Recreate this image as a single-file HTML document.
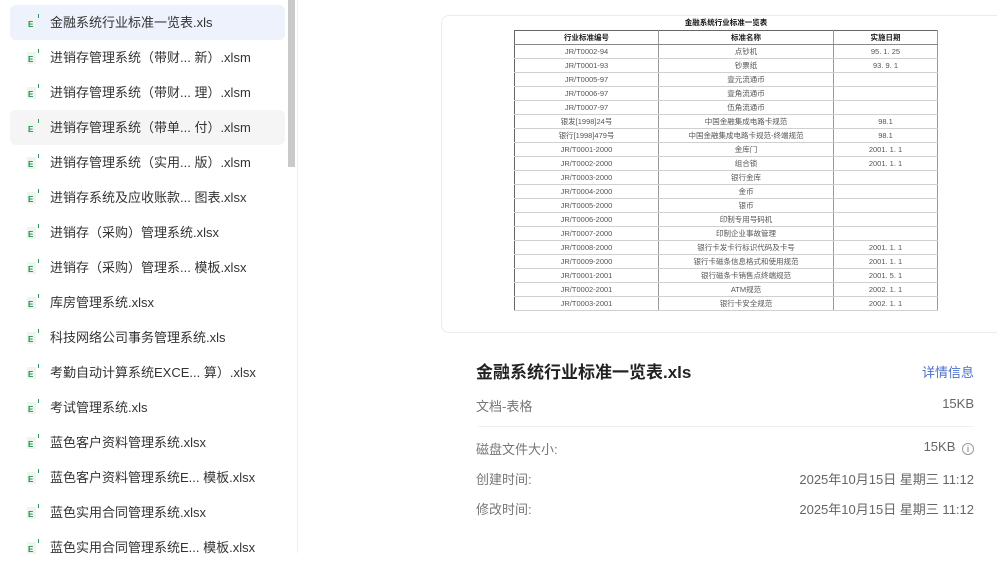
<!DOCTYPE html>
<html><head><meta charset="utf-8"><style>
*{margin:0;padding:0;box-sizing:border-box}
body{width:997px;height:553px;overflow:hidden;background:#fff;font-family:"Liberation Sans","Noto Sans CJK SC",sans-serif;position:relative}
.row{position:absolute;left:10px;width:275px;height:35px;border-radius:6px;font-size:13px;color:#333;line-height:35px;padding-left:40px}
.row .ic{position:absolute;left:17px;top:12px;width:9px;height:12px;background:#eef5ef}
.row .ic b{position:absolute;left:1px;bottom:0;font-size:8px;line-height:8px;color:#1f8f4e;font-weight:bold}
.row .ic i{position:absolute;right:-3px;top:-3px;width:1px;height:4px;background:#2a9a5a}
.sb{position:absolute;left:288px;top:0;width:7px;height:167px;background:#c9c9c9}
.vl{position:absolute;left:297px;top:0;width:1px;height:553px;background:#f0f0f0}
.card{position:absolute;left:441px;top:15px;width:580px;height:318px;border:1px solid #ebebeb;border-radius:8px}
.ttl{position:absolute;left:514px;top:17px;width:424px;text-align:center;font-size:7.5px;font-weight:bold;color:#111}
table{position:absolute;left:514px;top:30px;width:424px;border-collapse:collapse;font-size:7.5px;color:#555;border:1px solid #666}
td{height:14px;text-align:center;border-right:1px solid #999;border-bottom:1px solid #d0d0d0;padding:0;line-height:13px}
tr:first-child td{font-weight:bold;color:#222;border-bottom:1px solid #888}
.m{position:absolute;font-size:13px;color:#777}
.r{position:absolute;right:23px;font-size:13px;color:#666;text-align:right}
</style></head><body>
<div class="row" style="top:5px;background:#eef2fc">金融系统行业标准一览表.xls<span class="ic"><b>E</b><i></i></span></div>
<div class="row" style="top:40px">进销存管理系统（带财... 新）.xlsm<span class="ic"><b>E</b><i></i></span></div>
<div class="row" style="top:75px">进销存管理系统（带财... 理）.xlsm<span class="ic"><b>E</b><i></i></span></div>
<div class="row" style="top:110px;background:#f6f5f5">进销存管理系统（带单... 付）.xlsm<span class="ic"><b>E</b><i></i></span></div>
<div class="row" style="top:145px">进销存管理系统（实用... 版）.xlsm<span class="ic"><b>E</b><i></i></span></div>
<div class="row" style="top:180px">进销存系统及应收账款... 图表.xlsx<span class="ic"><b>E</b><i></i></span></div>
<div class="row" style="top:215px">进销存（采购）管理系统.xlsx<span class="ic"><b>E</b><i></i></span></div>
<div class="row" style="top:250px">进销存（采购）管理系... 模板.xlsx<span class="ic"><b>E</b><i></i></span></div>
<div class="row" style="top:285px">库房管理系统.xlsx<span class="ic"><b>E</b><i></i></span></div>
<div class="row" style="top:320px">科技网络公司事务管理系统.xls<span class="ic"><b>E</b><i></i></span></div>
<div class="row" style="top:355px">考勤自动计算系统EXCE... 算）.xlsx<span class="ic"><b>E</b><i></i></span></div>
<div class="row" style="top:390px">考试管理系统.xls<span class="ic"><b>E</b><i></i></span></div>
<div class="row" style="top:425px">蓝色客户资料管理系统.xlsx<span class="ic"><b>E</b><i></i></span></div>
<div class="row" style="top:460px">蓝色客户资料管理系统E... 模板.xlsx<span class="ic"><b>E</b><i></i></span></div>
<div class="row" style="top:495px">蓝色实用合同管理系统.xlsx<span class="ic"><b>E</b><i></i></span></div>
<div class="row" style="top:530px">蓝色实用合同管理系统E... 模板.xlsx<span class="ic"><b>E</b><i></i></span></div>
<div class="sb"></div><div class="vl"></div>
<div class="card"></div>
<div class="ttl">金融系统行业标准一览表</div>
<table>
<tr><td style="width:144px">行业标准编号</td><td style="width:175px">标准名称</td><td>实施日期</td></tr>
<tr><td>JR/T0002-94</td><td>点钞机</td><td>95. 1. 25</td></tr>
<tr><td>JR/T0001-93</td><td>钞票纸</td><td>93. 9. 1</td></tr>
<tr><td>JR/T0005-97</td><td>壹元流通币</td><td></td></tr>
<tr><td>JR/T0006-97</td><td>壹角流通币</td><td></td></tr>
<tr><td>JR/T0007-97</td><td>伍角流通币</td><td></td></tr>
<tr><td>银发[1998]24号</td><td>中国金融集成电路卡规范</td><td>98.1</td></tr>
<tr><td>银行[1998]479号</td><td>中国金融集成电路卡规范-终端规范</td><td>98.1</td></tr>
<tr><td>JR/T0001-2000</td><td>金库门</td><td>2001. 1. 1</td></tr>
<tr><td>JR/T0002-2000</td><td>组合锁</td><td>2001. 1. 1</td></tr>
<tr><td>JR/T0003-2000</td><td>银行金库</td><td></td></tr>
<tr><td>JR/T0004-2000</td><td>金币</td><td></td></tr>
<tr><td>JR/T0005-2000</td><td>银币</td><td></td></tr>
<tr><td>JR/T0006-2000</td><td>印制专用号码机</td><td></td></tr>
<tr><td>JR/T0007-2000</td><td>印制企业事故管理</td><td></td></tr>
<tr><td>JR/T0008-2000</td><td>银行卡发卡行标识代码及卡号</td><td>2001. 1. 1</td></tr>
<tr><td>JR/T0009-2000</td><td>银行卡磁条信息格式和使用规范</td><td>2001. 1. 1</td></tr>
<tr><td>JR/T0001-2001</td><td>银行磁条卡销售点终端规范</td><td>2001. 5. 1</td></tr>
<tr><td>JR/T0002-2001</td><td>ATM规范</td><td>2002. 1. 1</td></tr>
<tr><td>JR/T0003-2001</td><td>银行卡安全规范</td><td>2002. 1. 1</td></tr>
</table>
<div style="position:absolute;left:476px;top:358px;font-size:17px;font-weight:bold;color:#222">金融系统行业标准一览表.xls</div>
<div class="r" style="top:362px;color:#4a6fd0">详情信息</div>
<div class="m" style="left:476px;top:396px">文档-表格</div>
<div class="r" style="top:396px">15KB</div>
<div style="position:absolute;left:478px;top:426px;width:496px;height:1px;background:#f0f0f0"></div>
<div class="m" style="left:476px;top:439px">磁盘文件大小:</div>
<div class="r" style="top:439px">15KB <span style="display:inline-block;width:12px;height:12px;border:1px solid #999;border-radius:50%;font-size:9px;line-height:10px;text-align:center;vertical-align:-1px;margin-left:3px">i</span></div>
<div class="m" style="left:476px;top:469px">创建时间:</div>
<div class="r" style="top:469px">2025年10月15日 星期三 11:12</div>
<div class="m" style="left:476px;top:499px">修改时间:</div>
<div class="r" style="top:499px">2025年10月15日 星期三 11:12</div>
</body></html>
